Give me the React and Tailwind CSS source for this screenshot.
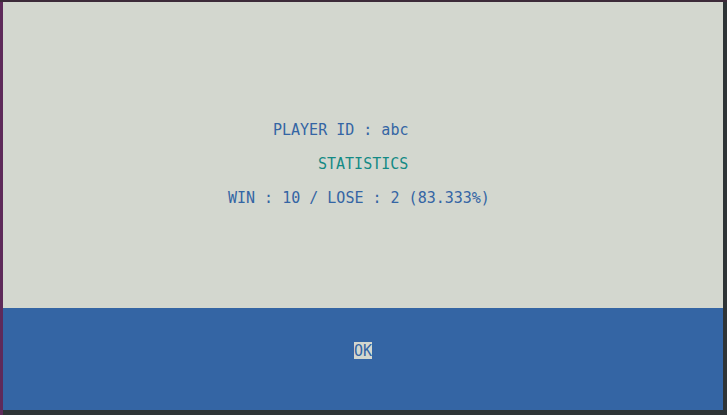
export default function App() {
  const mono = { fontFamily: '"DejaVu Sans Mono", monospace' };
  return (
    <div className="w-[727px] h-[415px] bg-[#2e3436] flex flex-col overflow-hidden">
      <div className="h-[2px] bg-[#3c2a39]" />
      <div className="flex flex-1">
        <div className="w-[3px] bg-[#5e2a5a]" />
        <div
          className="w-[720px] flex flex-col text-[15px] leading-[17px] whitespace-pre"
          style={mono}
        >
          <div className="h-[306px] bg-[#d3d7cf] flex flex-col pt-[120px]">
            <div className="h-[17px] pl-[270px] text-[#3465a4]">PLAYER ID : abc</div>
            <div className="h-[17px]" />
            <div className="h-[17px] pl-[315px] text-[#138a85]">STATISTICS</div>
            <div className="h-[17px]" />
            <div className="h-[17px] pl-[225px] text-[#3465a4]">WIN : 10 / LOSE : 2 (83.333%)</div>
          </div>
          <div className="h-[102px] bg-[#3465a4] flex flex-col pt-[34px]">
            <div className="h-[17px] pl-[351px] flex">
              <span className="bg-[#d3d7cf] text-[#3465a4] leading-[18px] h-[17px]">OK</span>
            </div>
          </div>
        </div>
        <div className="w-[4px] bg-[#2e3436]" />
      </div>
    </div>
  );
}
